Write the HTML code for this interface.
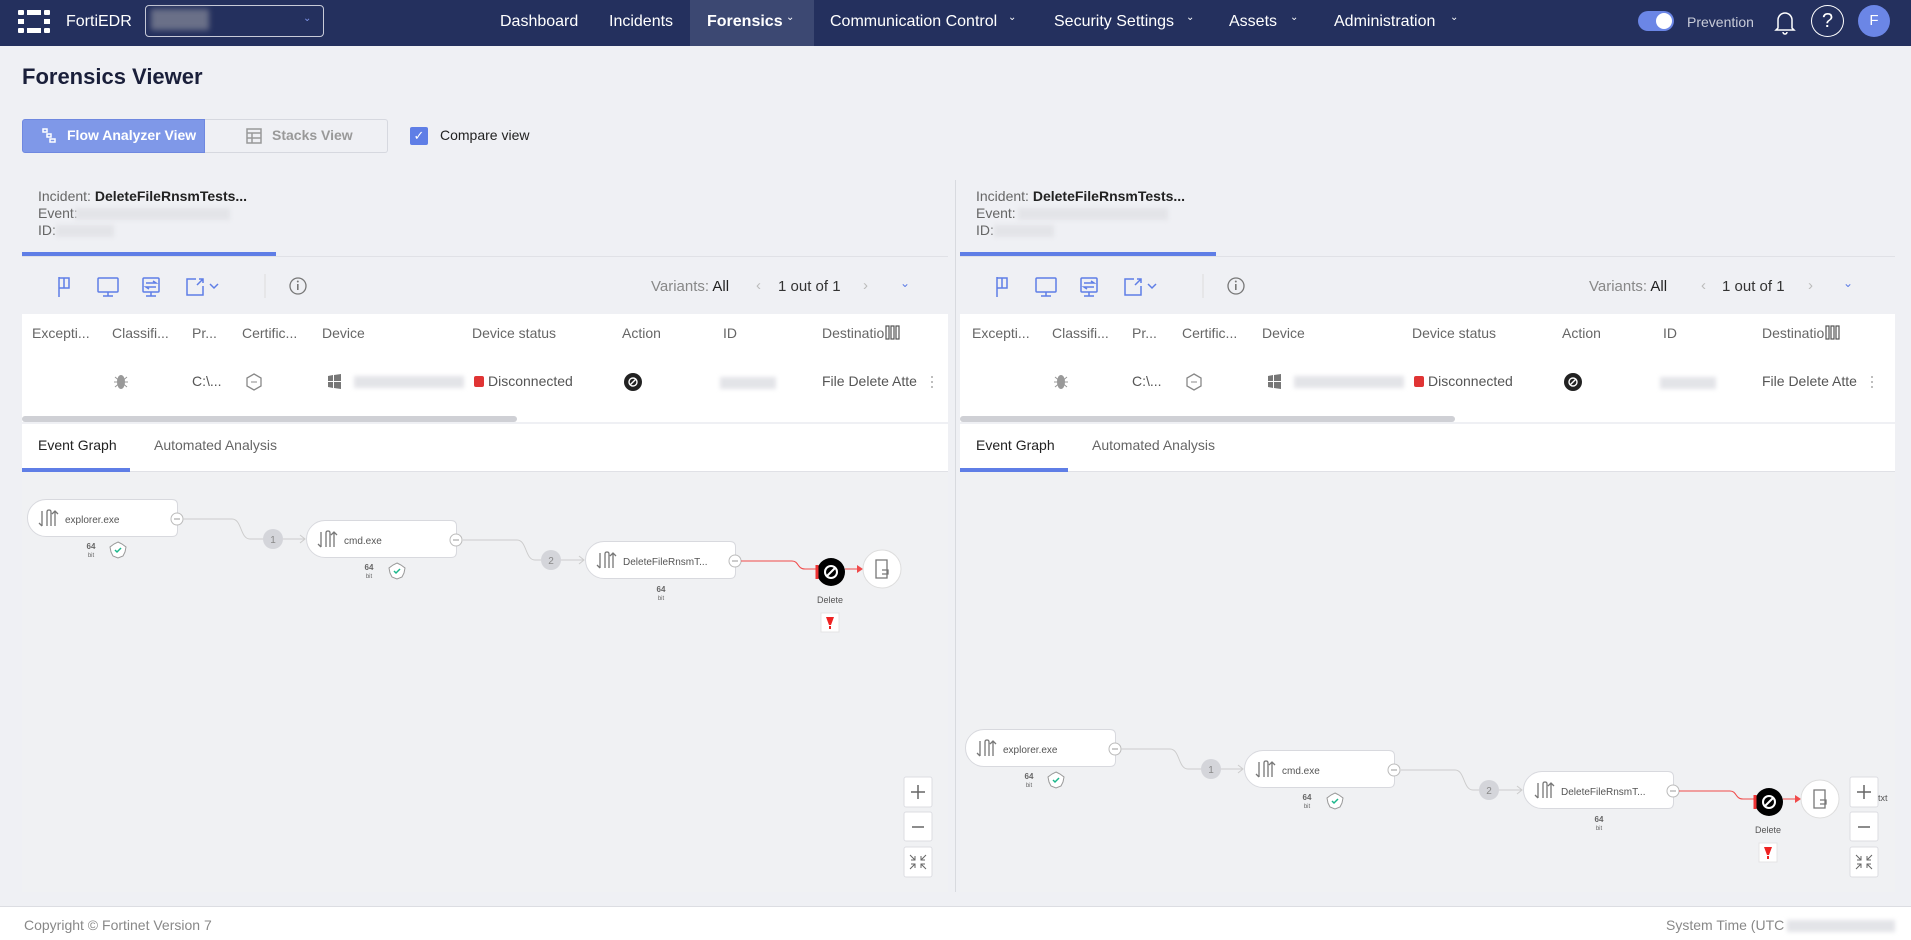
<!DOCTYPE html>
<html><head><meta charset="utf-8">
<style>
*{box-sizing:border-box;margin:0;padding:0}
body{width:1911px;height:940px;overflow:hidden;background:#eff0f4;font-family:"Liberation Sans",Arial,sans-serif;position:relative;color:#222}
.a{position:absolute;white-space:nowrap}
.hdr{position:absolute;left:0;top:0;width:1911px;height:46px;background:#24305e}
.nav{color:#fff;font-size:16px;top:13px}
.chev{font-size:10px;color:#fff}
.g{color:#666}
.sm{font-size:14px}
.blur{background:#e3e4e8;filter:blur(2px);height:12px}
</style></head><body>
<div class="hdr"></div>
<svg class="a" style="left:18px;top:10px" width="32" height="23" viewBox="0 0 32 23">
<g fill="#fff"><rect x="0" y="0" width="6" height="5" rx="1"/><rect x="9" y="0" width="14" height="5"/><rect x="26" y="0" width="6" height="5" rx="1"/>
<rect x="0" y="9" width="6" height="5"/><rect x="26" y="9" width="6" height="5"/>
<rect x="0" y="18" width="6" height="5" rx="1"/><rect x="9" y="18" width="14" height="5"/><rect x="26" y="18" width="6" height="5" rx="1"/></g></svg>
<div class="a" style="left:66px;top:13px;color:#fff;font-size:16px">FortiEDR</div>
<div class="a" style="left:145px;top:5px;width:179px;height:32px;border:1px solid #c8cbd8;border-radius:4px"></div>
<div class="a" style="left:151px;top:9px;width:58px;height:21px;background:#6a7088;filter:blur(3px)"></div>
<div class="a" style="left:303px;top:13px;color:#7f95e8;font-size:10px">&#8964;</div>
<div class="a nav" style="left:500px">Dashboard</div>
<div class="a nav" style="left:609px">Incidents</div>
<div class="a" style="left:690px;top:0;width:124px;height:46px;background:#3c4872"></div>
<div class="a nav" style="left:707px;font-weight:bold">Forensics</div>
<div class="a chev" style="left:786px;top:12px">&#8964;</div>
<div class="a nav" style="left:830px">Communication Control</div>
<div class="a chev" style="left:1008px;top:12px">&#8964;</div>
<div class="a nav" style="left:1054px">Security Settings</div>
<div class="a chev" style="left:1186px;top:12px">&#8964;</div>
<div class="a nav" style="left:1229px">Assets</div>
<div class="a chev" style="left:1290px;top:12px">&#8964;</div>
<div class="a nav" style="left:1334px">Administration</div>
<div class="a chev" style="left:1450px;top:12px">&#8964;</div>
<div class="a" style="left:1638px;top:11px;width:36px;height:20px;border-radius:10px;background:#6b86e6"></div>
<div class="a" style="left:1656px;top:13px;width:16px;height:16px;border-radius:8px;background:#fff"></div>
<div class="a" style="left:1687px;top:14px;color:#c8cbd8;font-size:14px">Prevention</div>
<svg class="a" style="left:1773px;top:8px" width="24" height="28" viewBox="0 0 24 28"><path d="M5 20V12a7 7 0 0 1 14 0v8l2 2H3z M10 24a2 2 0 0 0 4 0" fill="none" stroke="#fff" stroke-width="1.5"/></svg>
<div class="a" style="left:1811px;top:5px;width:33px;height:32px;border:1.5px solid #fff;border-radius:50%;color:#fff;font-size:20px;text-align:center;line-height:30px">?</div>
<div class="a" style="left:1858px;top:5px;width:32px;height:32px;border-radius:50%;background:#6b86e6;color:#fff;font-size:15px;text-align:center;line-height:32px">F</div>

<div class="a" style="left:22px;top:64px;font-size:22px;font-weight:bold;color:#1a1f3a">Forensics Viewer</div>
<div class="a" style="left:22px;top:119px;width:183px;height:34px;background:#7f98e8;border:1px solid #6f88e0;border-radius:3px 0 0 3px"></div>
<svg class="a" style="left:41px;top:128px" width="16" height="16" viewBox="0 0 16 16"><g fill="none" stroke="#fff" stroke-width="1.5"><rect x="2" y="1" width="4" height="3"/><rect x="6" y="6" width="4" height="3"/><rect x="9" y="11" width="5" height="3"/></g></svg>
<div class="a" style="left:67px;top:127px;color:#fff;font-size:14px;font-weight:bold">Flow Analyzer View</div>
<div class="a" style="left:205px;top:119px;width:183px;height:34px;border:1px solid #d6d8df;border-left:none;border-radius:0 3px 3px 0"></div>
<svg class="a" style="left:246px;top:128px" width="16" height="16" viewBox="0 0 16 16"><g fill="none" stroke="#999" stroke-width="1.5"><rect x="1" y="1" width="14" height="14"/><path d="M1 5H15M1 10H15M6 5V15"/></g></svg>
<div class="a" style="left:272px;top:127px;color:#999;font-size:14px;font-weight:bold">Stacks View</div>
<div class="a" style="left:410px;top:127px;width:18px;height:18px;background:#5f7ee6;border-radius:2px;color:#fff;font-size:13px;text-align:center;line-height:18px">&#10003;</div>
<div class="a" style="left:440px;top:127px;font-size:14px;color:#222">Compare view</div>

<div class="a" style="left:955px;top:180px;width:1px;height:712px;background:#d8dadf"></div>

<div class="a sm" style="left:38px;top:188px"><span class="g">Incident: </span><b style="color:#222">DeleteFileRnsmTests...</b></div>
<div class="a sm g" style="left:38px;top:205px">Event:</div><div class="a blur" style="left:75px;top:208px;width:155px"></div>
<div class="a sm g" style="left:38px;top:222px">ID:</div><div class="a blur" style="left:56px;top:225px;width:58px"></div>
<div class="a" style="left:22px;top:252px;width:254px;height:4px;background:#5f7ee6"></div>
<div class="a" style="left:22px;top:256px;width:926px;height:1px;background:#e0e1e6"></div>

<div class="a sm" style="left:976px;top:188px"><span class="g">Incident: </span><b style="color:#222">DeleteFileRnsmTests...</b></div>
<div class="a sm g" style="left:976px;top:205px">Event:</div><div class="a blur" style="left:1018px;top:208px;width:150px"></div>
<div class="a sm g" style="left:976px;top:222px">ID:</div><div class="a blur" style="left:994px;top:225px;width:60px"></div>
<div class="a" style="left:960px;top:252px;width:256px;height:4px;background:#5f7ee6"></div>
<div class="a" style="left:960px;top:256px;width:935px;height:1px;background:#e0e1e6"></div>

<svg class="a" style="left:0;top:0" width="1911" height="940">
<defs>
<g id="tb" fill="none" stroke="#5f7ee6" stroke-width="1.5">
<path d="M0 -9V11M0 -8H10V2H0M5 -8V2"/>
<rect x="39" y="-8" width="20" height="14" rx="1"/><path d="M49 6V10M44 10H54"/>
<rect x="84" y="-8" width="16" height="14" rx="1"/><path d="M92 6V10M87 10H97M87 -3H97L94 -5M97 1H87L90 3"/>
<path d="M137 -7H128V9H144V0"/><path d="M140 -7H144V-3M144 -7L138 -1"/>
<path d="M151 -2L155 2L159 -2"/>
</g>
<g id="node"><path d="M19 0.5H145Q150.5 0.5 150.5 6V32Q150.5 37.5 145 37.5H19A18.5 18.5 0 0 1 19 0.5Z" fill="#fff" stroke="#d8d9de"/>
<path d="M15 12V27M12 24L15 27M20 27V13Q20 11 22 11Q24 11 24 13V27M28 27V12M25 15L28 12L31 15" fill="none" stroke="#777" stroke-width="1.3"/>
<circle cx="150" cy="20" r="6" fill="#fff" stroke="#bbb"/><path d="M147 20H153" stroke="#999"/></g>
<g id="badge"><path d="M0 -8L4 -6L8 -3L7 2L5 6L0 8L-5 6L-7 2L-8 -3L-4 -6Z" fill="#fff" stroke="#999"/><path d="M-3 0L-1 2L3 -2" fill="none" stroke="#1bb78b" stroke-width="1.5"/></g>
<g id="bit" font-family="Liberation Sans" fill="#666" text-anchor="middle"><text x="0" y="0" font-size="8" font-weight="bold">64</text><text x="0" y="8" font-size="6">bit</text></g>
<g id="graph" font-family="Liberation Sans">
<use href="#node"/><text x="38" y="24" font-size="10" fill="#555">explorer.exe</text>
<use href="#bit" x="64" y="50"/><use href="#badge" x="91" y="51"/>
<path d="M156 20H205C215 20 213 40 223 40H236" fill="none" stroke="#ccc"/>
<circle cx="246" cy="40" r="10" fill="#d4d5da"/><text x="246" y="44" font-size="10" fill="#888" text-anchor="middle">1</text>
<path d="M256 40H277M273 36L278 40L273 44" fill="none" stroke="#ccc"/>
<use href="#node" x="279" y="21"/><text x="317" y="45" font-size="10" fill="#555">cmd.exe</text>
<use href="#bit" x="342" y="71"/><use href="#badge" x="370" y="72"/>
<path d="M436 41H490C500 41 498 61 508 61H514" fill="none" stroke="#ccc"/>
<circle cx="524" cy="61" r="10" fill="#d4d5da"/><text x="524" y="65" font-size="10" fill="#888" text-anchor="middle">2</text>
<path d="M534 61H556M552 57L557 61L552 65" fill="none" stroke="#ccc"/>
<use href="#node" x="558" y="42"/><text x="596" y="66" font-size="10" fill="#555">DeleteFileRnsmT...</text>
<use href="#bit" x="634" y="93"/>
<path d="M714 62H765C772 62 770 70 778 70H790" fill="none" stroke="#f04a4a"/>
<circle cx="804" cy="73" r="14" fill="#000"/><path d="M790 66V80" stroke="#e33" stroke-width="3"/>
<circle cx="804" cy="73" r="6" fill="none" stroke="#fff" stroke-width="2"/><path d="M800 77L808 69" stroke="#fff" stroke-width="2"/>
<path d="M818 70H834" stroke="#f04a4a"/><path d="M830 66L836 70L830 74Z" fill="#f04a4a"/>
<circle cx="855" cy="70" r="19" fill="#fff" stroke="#ddd"/>
<path d="M849 61H860V79H849ZM855 71H861V75H855" fill="none" stroke="#777" stroke-width="1.3"/>
<text x="803" y="104" font-size="9" fill="#555" text-anchor="middle">Delete</text>
<rect x="794" y="114" width="18" height="19" fill="#fff" stroke="#e4e4e4"/>
<path d="M799 118H807L804 126H802Z" fill="#ee2222"/><rect x="802" y="127" width="2" height="3" fill="#ee2222"/>
</g>
<g id="zc" fill="#fff" stroke="#dcdde2">
<rect x="0" y="0" width="28" height="30" rx="2"/><rect x="0" y="35" width="28" height="29" rx="2"/><rect x="0" y="70" width="28" height="30" rx="2"/>
<path d="M14 8V22M7 15H21M8 50H20" stroke="#666" stroke-width="1.5"/>
<path d="M6 78L11 83M11 79V83H7M22 78L17 83M17 79V83H21M6 92L11 87M7 87H11V91M22 92L17 87M21 87H17V91" stroke="#666" fill="none"/>
</g>
</defs>
<use href="#tb" x="59" y="286"/><path d="M265 274V298" stroke="#ddd"/>
<use href="#tb" x="997" y="286"/><path d="M1203 274V298" stroke="#ddd"/>
<g fill="none" stroke="#777" stroke-width="1.3"><circle cx="298" cy="286" r="8"/><circle cx="1236" cy="286" r="8"/></g>
<g fill="#777"><rect x="297" y="284" width="1.6" height="6"/><circle cx="297.8" cy="281.5" r="1"/><rect x="1235" y="284" width="1.6" height="6"/><circle cx="1235.8" cy="281.5" r="1"/></g>
<use href="#graph" x="27" y="499"/>
<use href="#graph" x="965" y="729"/>
<use href="#zc" x="904" y="777"/>
<use href="#zc" x="1850" y="777"/>
<g id="row">
<g fill="#999"><ellipse cx="121" cy="382" rx="4" ry="7"/><path d="M115 377L127 387M115 387L127 377M114 382H128" stroke="#999"/></g>
<path d="M254 374L261 378V386L254 390L247 386V378Z" fill="none" stroke="#888" stroke-width="1.3"/><path d="M251 382H257" stroke="#888"/>
<g fill="#777"><path d="M328 376L333 375V381H328ZM334 375L341 374V381H334ZM328 382H333V388L328 387ZM334 382H341V389L334 388Z"/></g>
<rect x="474" y="376" width="10" height="11" rx="2" fill="#e03434"/>
<circle cx="633" cy="382" r="9" fill="#222"/><circle cx="633" cy="382" r="4" fill="none" stroke="#fff" stroke-width="1.4"/><path d="M630 385L636 379" stroke="#fff" stroke-width="1.4"/>
<g fill="#aaa"><circle cx="932" cy="377" r="1"/><circle cx="932" cy="382" r="1"/><circle cx="932" cy="387" r="1"/></g>
<g fill="none" stroke="#555" stroke-width="1.2"><rect x="886" y="326" width="3" height="13"/><rect x="891" y="326" width="3" height="13"/><rect x="896" y="326" width="3" height="13"/></g>
</g>
<use href="#row" x="940" y="0"/>
</svg>

<div class="a sm" style="left:651px;top:278px;font-size:15px"><span style="color:#888">Variants: </span>All</div>
<div class="a" style="left:756px;top:277px;color:#bbb;font-size:15px">&#8249;</div>
<div class="a" style="left:778px;top:278px;font-size:15px;color:#333">1 out of 1</div>
<div class="a" style="left:863px;top:277px;color:#bbb;font-size:15px">&#8250;</div>
<div class="a" style="left:900px;top:276px;color:#5f7ee6;font-size:12px">&#8964;</div>
<div class="a sm" style="left:1589px;top:278px;font-size:15px"><span style="color:#888">Variants: </span>All</div>
<div class="a" style="left:1701px;top:277px;color:#bbb;font-size:15px">&#8249;</div>
<div class="a" style="left:1722px;top:278px;font-size:15px;color:#333">1 out of 1</div>
<div class="a" style="left:1808px;top:277px;color:#bbb;font-size:15px">&#8250;</div>
<div class="a" style="left:1843px;top:276px;color:#5f7ee6;font-size:12px">&#8964;</div>

<div class="a" style="left:22px;top:314px;width:926px;height:108px;background:#fff;z-index:-1"></div>
<div class="a" style="left:22px;top:416px;width:495px;height:6px;background:#cfd0d5;border-radius:3px"></div>
<div class="a" style="left:960px;top:314px;width:935px;height:108px;background:#fff;z-index:-1"></div>
<div class="a" style="left:960px;top:416px;width:495px;height:6px;background:#cfd0d5;border-radius:3px"></div>
<div style="position:absolute;left:0;top:325px;font-size:14px;color:#666">
<span class="a" style="left:32px">Excepti...</span><span class="a" style="left:112px">Classifi...</span><span class="a" style="left:192px">Pr...</span><span class="a" style="left:242px">Certific...</span><span class="a" style="left:322px">Device</span><span class="a" style="left:472px">Device status</span><span class="a" style="left:622px">Action</span><span class="a" style="left:723px">ID</span><span class="a" style="left:822px">Destinatio</span>
<span class="a" style="left:972px">Excepti...</span><span class="a" style="left:1052px">Classifi...</span><span class="a" style="left:1132px">Pr...</span><span class="a" style="left:1182px">Certific...</span><span class="a" style="left:1262px">Device</span><span class="a" style="left:1412px">Device status</span><span class="a" style="left:1562px">Action</span><span class="a" style="left:1663px">ID</span><span class="a" style="left:1762px">Destinatio</span>
</div>
<div style="position:absolute;left:0;top:373px;font-size:14px;color:#555">
<span class="a" style="left:192px">C:\...</span><span class="a" style="left:488px">Disconnected</span><span class="a" style="left:822px">File Delete Atte</span>
<span class="a" style="left:1132px">C:\...</span><span class="a" style="left:1428px">Disconnected</span><span class="a" style="left:1762px">File Delete Atte</span>
</div>
<div class="a blur" style="left:354px;top:376px;width:110px"></div>
<div class="a blur" style="left:720px;top:377px;width:56px"></div>
<div class="a blur" style="left:1294px;top:376px;width:110px"></div>
<div class="a blur" style="left:1660px;top:377px;width:56px"></div>

<div class="a" style="left:22px;top:424px;width:926px;height:48px;background:#fff;z-index:-1;border-bottom:1px solid #e0e1e6"></div>
<div class="a" style="left:960px;top:424px;width:935px;height:48px;background:#fff;z-index:-1;border-bottom:1px solid #e0e1e6"></div>
<div class="a sm" style="left:38px;top:437px;color:#222">Event Graph</div>
<div class="a sm" style="left:154px;top:437px;color:#666">Automated Analysis</div>
<div class="a" style="left:22px;top:468px;width:108px;height:4px;background:#5f7ee6"></div>
<div class="a sm" style="left:976px;top:437px;color:#222">Event Graph</div>
<div class="a sm" style="left:1092px;top:437px;color:#666">Automated Analysis</div>
<div class="a" style="left:960px;top:468px;width:108px;height:4px;background:#5f7ee6"></div>

<div class="a" style="left:22px;top:472px;width:926px;height:420px;background:#f0f1f3;z-index:-2"></div>
<div class="a" style="left:960px;top:472px;width:935px;height:420px;background:#f0f1f3;z-index:-2"></div>
<div class="a" style="left:0;top:906px;width:1911px;height:34px;background:#fff;border-top:1px solid #dcdde2"></div>
<div class="a" style="left:24px;top:917px;font-size:14px;color:#888">Copyright © Fortinet Version 7</div>
<div class="a" style="left:1666px;top:917px;font-size:14px;color:#888">System Time (UTC</div>
<div class="a blur" style="left:1787px;top:920px;width:108px"></div>
<div class="a" style="left:1878px;top:793px;font-size:9px;color:#555">txt</div>
</body></html>
